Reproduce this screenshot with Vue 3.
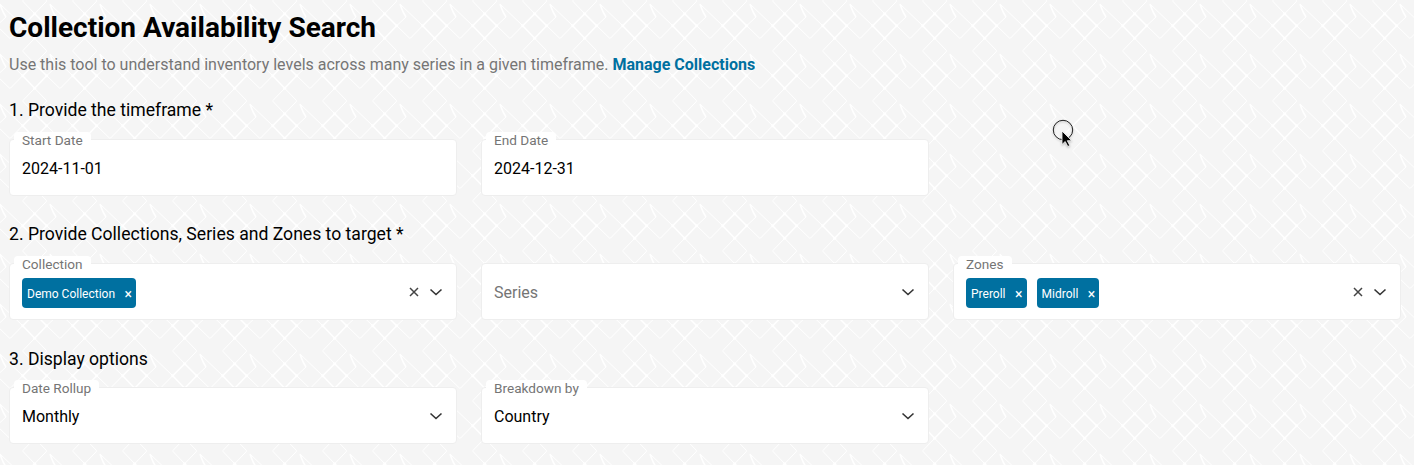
<script setup>
const tileSvg = `<svg xmlns="http://www.w3.org/2000/svg" xmlns:xlink="http://www.w3.org/1999/xlink" width="50" height="50" viewBox="0 0 50 50"><defs><g id="a" fill="none" stroke="#fff" stroke-linejoin="round"><path stroke-width="1.5" d="M34.7 13.7L46.7 25.7L34.7 38.2L22.7 25.7Z"/><path stroke-width="1" d="M34.7 -11.7L23.2 0.2Q22.5 0.9 23.2 1.7L34.7 13.7M34.7 -11.7L46.2 0.2Q46.9 0.9 46.2 1.7L34.7 13.7"/><path stroke-width="1" d="M46.7 25.7L59.4 38Q60 38.6 60.6 38L72.7 25.7M50 4L72.7 25.7M46.7 25.7L56 17"/><path stroke-width="1.5" d="M50 4Q52.5 12 56 17"/><g fill="#fff" stroke="none"><circle cx="34.7" cy="13.7" r="1.5"/><circle cx="46.7" cy="25.7" r="1.5"/><circle cx="22.7" cy="25.7" r="1.5"/><circle cx="34.7" cy="38.2" r="1.5"/></g></g></defs><use xlink:href="#a"/><use xlink:href="#a" x="-50"/><use xlink:href="#a" y="50"/><use xlink:href="#a" x="-50" y="50"/></svg>`
const tile = `data:image/svg+xml,${encodeURIComponent(tileSvg)}`
const rows = [
  { title: '1. Provide the timeframe *', fields: [
    { label: 'Start Date', value: '2024-11-01' },
    { label: 'End Date', value: '2024-12-31' },
  ] },
  { title: '2. Provide Collections, Series and Zones to target *', fields: [
    { label: 'Collection', tags: ['Demo Collection'], select: true, clear: true },
    { placeholder: 'Series', select: true },
    { label: 'Zones', tags: ['Preroll', 'Midroll'], select: true, clear: true },
  ] },
  { title: '3. Display options', fields: [
    { label: 'Date Rollup', value: 'Monthly', select: true },
    { label: 'Breakdown by', value: 'Country', select: true },
  ] },
]
</script>

<template>
  <main class="page" :style="{ backgroundImage: `url('${tile}')` }">
    <h1>Collection Availability Search</h1>
    <p class="intro">Use this tool to understand inventory levels across many series in a given timeframe. <a href="#">Manage Collections</a></p>
    <section v-for="row in rows" :key="row.title">
      <h2>{{ row.title }}</h2>
      <div class="grid">
        <div v-for="(f, i) in row.fields" :key="i" class="field">
          <span v-if="f.label" class="label">{{ f.label }}</span>
          <div class="content">
            <span v-for="t in f.tags" :key="t" class="tag">{{ t }}<span class="tag-x">×</span></span>
            <span v-if="f.value" class="value">{{ f.value }}</span>
            <span v-if="f.placeholder" class="placeholder">{{ f.placeholder }}</span>
          </div>
          <svg v-if="f.clear" class="icon" viewBox="0 0 16 16"><path d="M4 4l8 8M12 4l-8 8" /></svg>
          <svg v-if="f.select" class="icon chev" viewBox="0 0 16 16"><path d="M2.5 5.5L8 10.5l5.5-5" /></svg>
        </div>
      </div>
    </section>
    <div class="cursor">
      <svg width="24" height="30" viewBox="0 0 24 30"><circle cx="11" cy="11" r="9.7" fill="none" stroke="#222" stroke-width="1"/><path d="M10 12v13.5l3.2-3 2.6 5 2-1-2.5-4.8h4.4z" fill="#000" stroke="#fff" stroke-width="0.8"/></svg>
    </div>
  </main>
</template>

<style scoped>
.page { position: relative; box-sizing: border-box; width: 1414px; height: 465px; overflow: hidden; padding: 11px 13px 0 9px; background-color: #f5f5f5; font-family: Roboto, sans-serif; color: #000; }
h1 { margin: 0; font-size: 28px; line-height: 34px; font-weight: 700; }
.intro { margin: 9px 0 0; font-size: 16px; line-height: 22px; color: #757575; }
.intro a { color: #0070a0; font-weight: 700; text-decoration: none; }
section { margin-top: 22px; }
section + section { margin-top: 27px; }
section:nth-of-type(2) { margin-top: 26px; }
section:nth-of-type(3) .grid { margin-top: 16px; }
h2 { margin: 0; font-size: 17.6px; line-height: 24px; font-weight: 400; color: #000; }
.grid { display: grid; grid-template-columns: repeat(3, 448px); gap: 24px; margin-top: 17px; }
.field { position: relative; box-sizing: border-box; height: 57px; display: flex; align-items: center; gap: 6px; padding: 0 12px; background: #fff; border: 1px solid #eee; border-radius: 4px; }
.label { position: absolute; left: 4px; top: -8px; padding: 0 8px; font-size: 13.6px; line-height: 16px; color: #757575; background: #fff; border-radius: 4px 4px 0 0; }
.content { flex: 1; display: flex; align-items: center; gap: 10px; padding-top: 2px; }
.value { font-size: 16px; color: #000; }
.placeholder { font-size: 16px; color: #757575; }
.tag { display: inline-flex; align-items: center; justify-content: space-between; height: 30px; box-sizing: border-box; padding: 2px 4px 0 5px; gap: 9.5px; background: #0070a0; color: #fff; font-size: 12px; border-radius: 4px; }
.tag-x { font-size: 14px; font-weight: 400; }
.icon { width: 16px; height: 16px; fill: none; stroke: #444; stroke-width: 1.5; }
.chev { stroke: #333; stroke-width: 1.6; }
.cursor { position: absolute; left: 1052px; top: 119px; line-height: 0; filter: drop-shadow(0 1px 1px rgba(0,0,0,.25)); }
</style>
